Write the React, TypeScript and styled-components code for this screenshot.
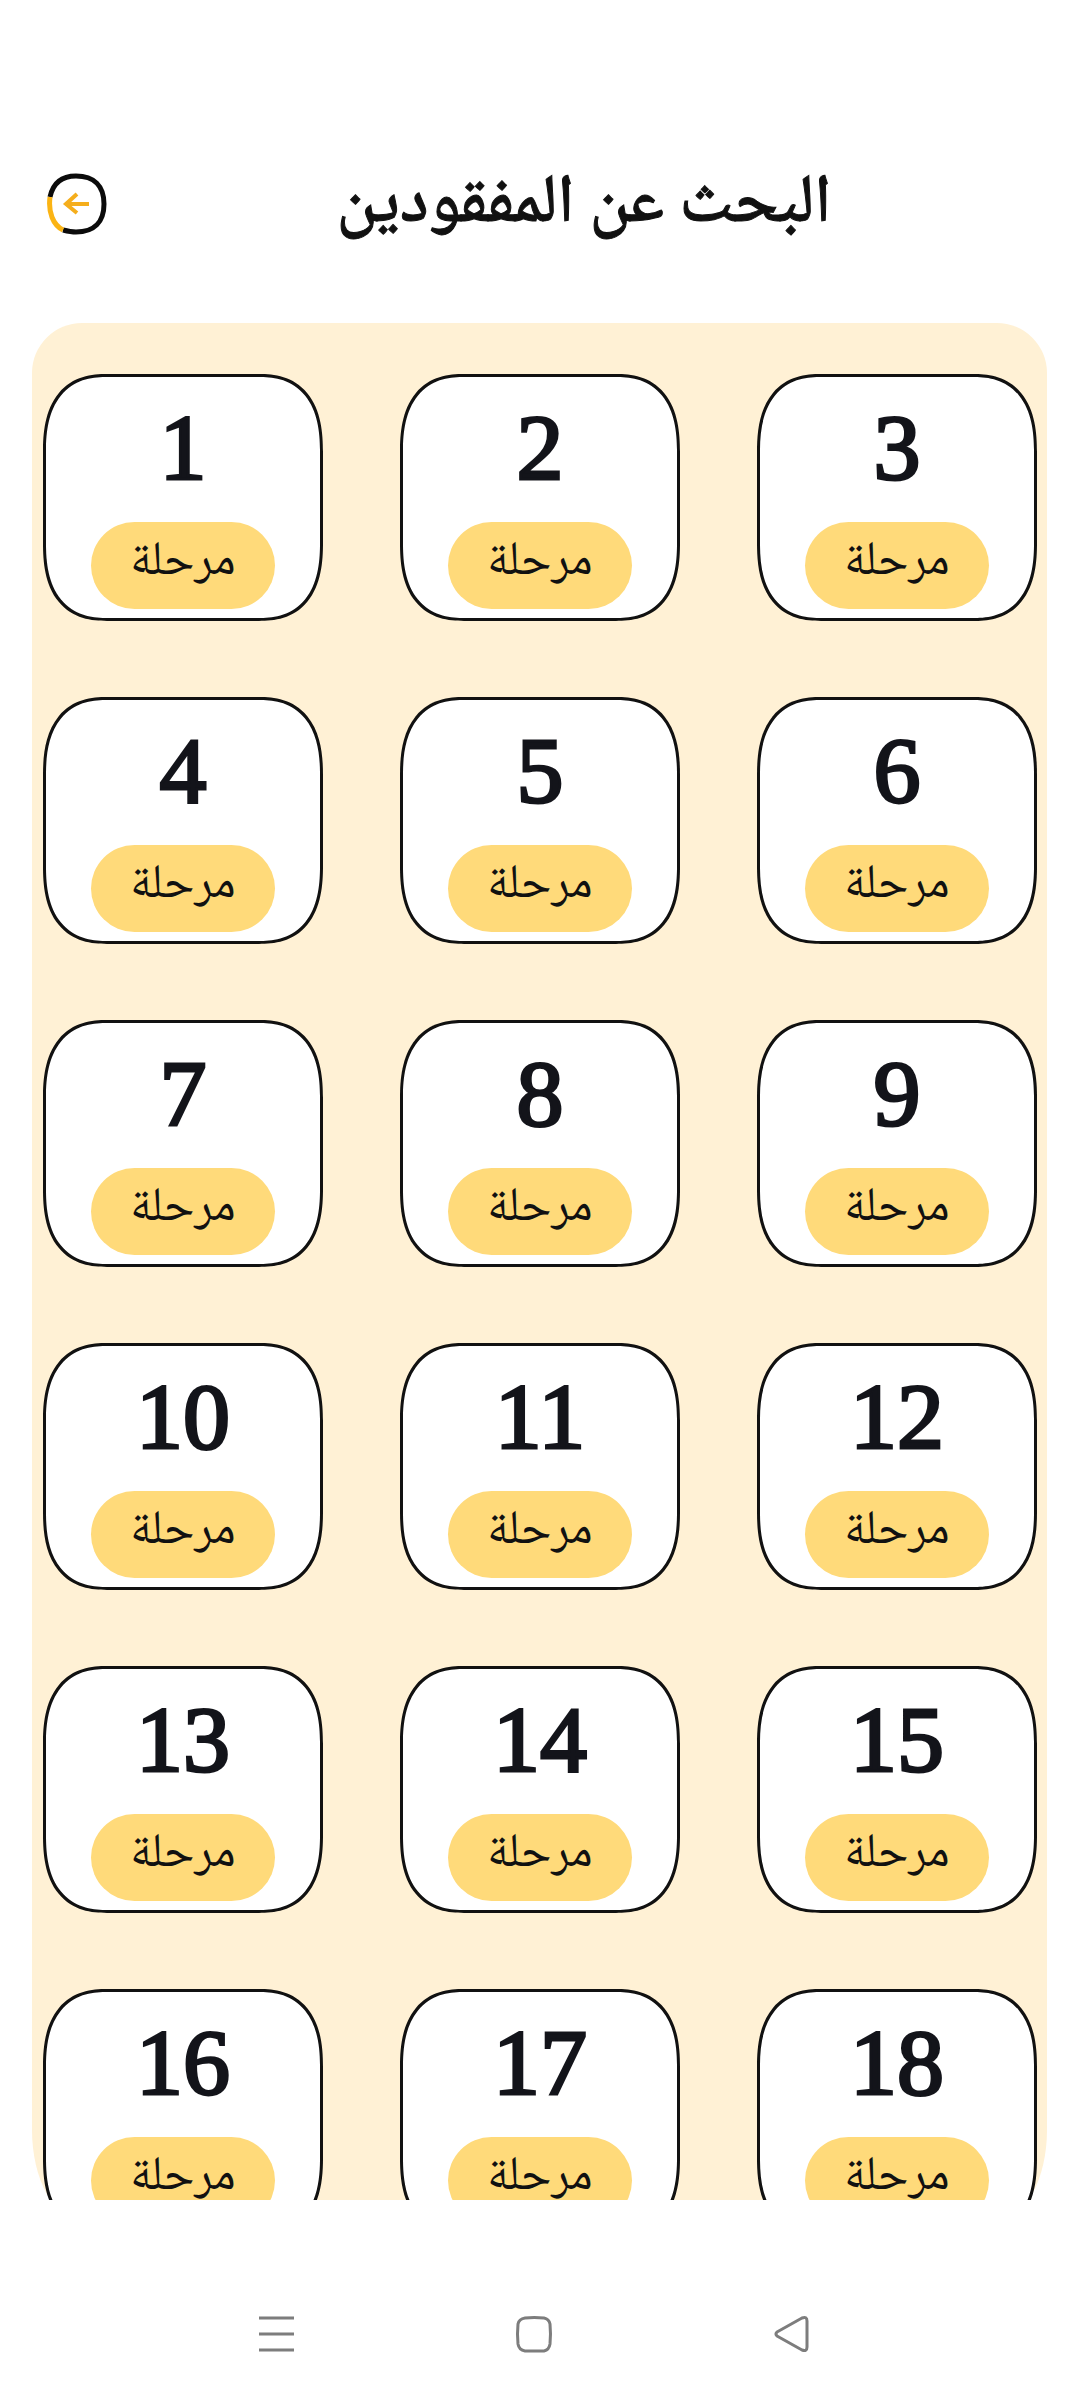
import React from "react";
import styled, { createGlobalStyle } from "styled-components";

const GlobalStyle = createGlobalStyle`
  *, *::before, *::after { box-sizing: border-box; }
  body { margin: 0; background: #fff; }
  button { font: inherit; color: inherit; border: 0; background: none; padding: 0; cursor: pointer; }
`;

const Screen = styled.div`
  display: flex;
  flex-direction: column;
  height: 100vh;
  background: #fff;
  color: #111;
  font-family: "Noto Naskh Arabic", "DejaVu Sans", sans-serif;
`;

const Header = styled.header`
  display: grid;
  grid-template-columns: 62px 1fr 62px;
  align-items: center;
  padding: 160px 44px 71px 46px;
`;

const BackButton = styled.button`
  display: block;
  width: 62px;
  height: 62px;
  margin-bottom: 4px;
  svg { display: block; }
`;

const Title = styled.h1`
  margin: 0;
  padding-left: 86px;
  text-align: center;
  font-size: 68px;
  line-height: 92px;
  font-weight: 500;
  -webkit-text-stroke: 1px #111;
`;

const Scroller = styled.main`
  flex: 1;
  min-height: 0;
  overflow-y: auto;
  scrollbar-width: none;
  padding: 0 33px 0 32px;
`;

const Panel = styled.section`
  display: grid;
  grid-template-columns: repeat(3, 1fr);
  align-content: start;
  gap: 76px 77px;
  height: calc(100% + 20px);
  padding: 51px 10px 0 11px;
  background: #fff1d5;
  border-radius: 50px 50px 50px 50px / 50px 50px 90px 90px;
`;

const Card = styled.button`
  display: flex;
  flex-direction: column;
  align-items: center;
  justify-content: flex-end;
  height: 247px;
  padding-bottom: 9px;
  background: #fff;
  border: 3px solid #111;
  border-radius: 64px / 78px;
  corner-shape: superellipse(1.3);
`;

const Level = styled.span`
  font-family: "Liberation Serif", serif;
  font-weight: 400;
  font-size: 94px;
  line-height: 104px;
  margin-bottom: 23px;
  color: #13141a;
  -webkit-text-stroke: 3px #13141a;
`;

const Pill = styled.span`
  width: 184px;
  height: 87px;
  border-radius: 44px;
  background: #ffda7a;
  text-align: center;
  font-size: 48px;
  line-height: 84px;
`;

const NavBar = styled.nav`
  display: flex;
  justify-content: center;
  gap: 214px;
  padding: 112px 0 44px;
  margin-right: 6px;
`;

const NavButton = styled.button`
  width: 44px;
  height: 44px;
  svg { display: block; }
`;

const levels = Array.from({ length: 18 }, (_, i) => i + 1);

export default function App() {
  return (
    <>
      <GlobalStyle />
      <Screen lang="ar">
        <Header>
          <BackButton aria-label="رجوع">
            <svg width="62" height="62" viewBox="0 0 62 62" fill="none" strokeWidth="5">
              <path d="M4 24C7 10 16 3 30 3C48 3 58 13 58 31C58 49 48 59 30 59C25 59 21 58 17 57" stroke="#0b0b0b" />
              <path d="M4 24C2 39 7 52 17 57" stroke="#fbb414" />
              <path d="M43 31H21M31 21L20 31L31 40" stroke="#f5ae1c" strokeWidth="4" />
            </svg>
          </BackButton>
          <Title dir="rtl">البحث عن المفقودين</Title>
        </Header>
        <Scroller>
          <Panel>
            {levels.map((n) => (
              <Card key={n}>
                <Level>{n}</Level>
                <Pill dir="rtl">مرحلة</Pill>
              </Card>
            ))}
          </Panel>
        </Scroller>
        <NavBar>
          <NavButton aria-label="التطبيقات الأخيرة">
            <svg width="44" height="44" viewBox="0 0 44 44" stroke="#7d7d7d" strokeWidth="3">
              <path d="M2 6H37M2 22H37M2 38H37" />
            </svg>
          </NavButton>
          <NavButton aria-label="الرئيسية">
            <svg width="44" height="44" viewBox="0 0 44 44" fill="none" stroke="#7d7d7d" strokeWidth="3">
              <path d="M10 6Q19 5 29 6Q34 7 35 12Q36 22 35 32Q34 38 29 39H10Q4 38 3 32Q2 22 3 12Q4 7 10 6Z" />
            </svg>
          </NavButton>
          <NavButton aria-label="السابق">
            <svg width="44" height="44" viewBox="0 0 44 44" fill="none" stroke="#7d7d7d" strokeWidth="3" strokeLinejoin="round">
              <path d="M4 20L29 6Q34 4 34 9V35Q34 40 29 38L4 24Q2 22 4 20Z" />
            </svg>
          </NavButton>
        </NavBar>
      </Screen>
    </>
  );
}
